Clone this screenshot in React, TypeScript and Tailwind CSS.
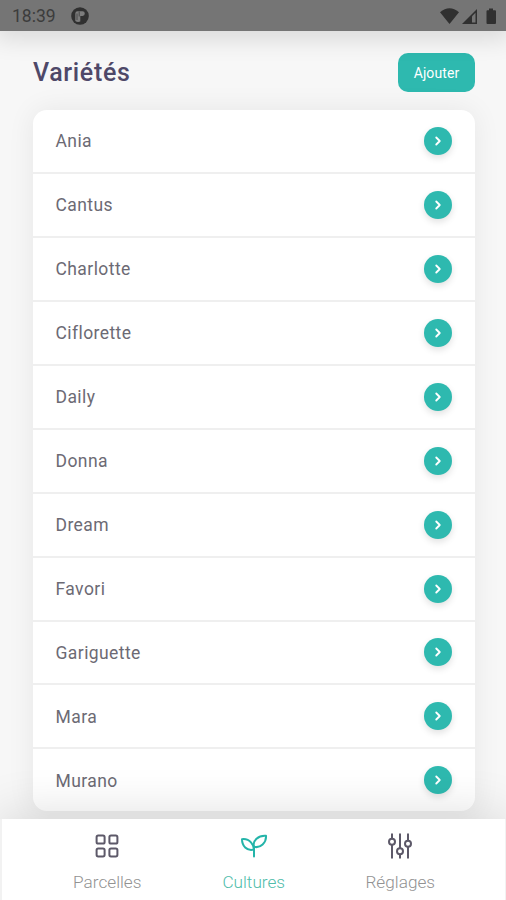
import { ChevronRight } from "lucide-react";

const varieties = [
    "Ania",
    "Cantus",
    "Charlotte",
    "Ciflorette",
    "Daily",
    "Donna",
    "Dream",
    "Favori",
    "Gariguette",
    "Mara",
    "Murano",
];

function StatusBar() {
    return (
        <div className="relative z-10 flex h-[31px] shrink-0 items-center justify-between bg-[#757575] pl-[12px] pr-[9px] pt-[1px] text-[#3c3c3c] shadow-[0_3px_24px_5px_rgba(0,0,0,0.12)]">
            <div className="flex items-center gap-[14px]">
                <span className="w-[45px] pt-px text-[17.5px] leading-none">18:39</span>
                <svg width="18" height="18" viewBox="0 0 18 18">
                    <circle cx="9" cy="9" r="8.8" fill="#303030" />
                    <path d="M4.3 14V6.5Q4.3 4.2 6.6 4.2H11.500Q13.800 4.200 13.800 6.600T11.500 9H9.300V14.500Q6.500 15.500 4.300 14Z" fill="#7c7c7c" />
                    <path d="M8.2 4.5V9.5M6 6.5V13" stroke="#484848" strokeWidth="1" />
                </svg>
            </div>
            <svg width="57" height="17" viewBox="0 0 57 17" fill="#303030">
                <path d="M0 4.2Q9.5-3.6 19 4.2L9.5 16Z" />
                <path d="M22 16L37 1V16Z" />
                <path d="M32 8.2L35.5 4.7V14.5H32Z" fill="#757575" />
                <path d="M47 2.2H49V.5H53V2.2H55Q56 2.2 56 3.2V15Q56 16 55 16H47.5Q46.5 16 46.5 15V3.2Q46.5 2.2 47.5 2.2Z" />
            </svg>
        </div>
    );
}

function VarietyRow({ name }: { name: string }) {
    return (
        <li className="flex h-[63.95px] items-center justify-between border-b-2 border-[#efefef] pl-[22.5px] pr-[22.6px] last:h-[62px] last:border-b-0">
            <span className="pt-[2px] text-[17.5px] leading-none tracking-[0.42px] text-[#6c6a74]">{name}</span>
            <button className="flex size-[28px] items-center justify-center rounded-full bg-[#2eb9af] text-white shadow-[0_3px_7px_rgba(0,0,0,0.12)]">
                <ChevronRight size={14} strokeWidth={3.2} />
            </button>
        </li>
    );
}

function ParcelIcon() {
    return (
        <svg width="24" height="24" viewBox="0 0 24 24" fill="none" stroke="#5d5969" strokeWidth="2">
            <rect x="1.6" y="1.6" width="8" height="8" rx="1.6" />
            <rect x="14.4" y="1.6" width="8" height="8" rx="1.6" />
            <rect x="1.6" y="14.4" width="8" height="8" rx="1.6" />
            <rect x="14.4" y="14.4" width="8" height="8" rx="1.6" />
        </svg>
    );
}

function CultureIcon() {
    return (
        <svg width="28" height="24" viewBox="0 0 28 24" fill="none" stroke="#24b4a9" strokeWidth="2" strokeLinejoin="round" strokeLinecap="round">
            <path d="M14 22.5V12.5" />
            <path d="M14 15.5C14 12 10.500 4.200 2 5.200C2 11.500 6.500 17.500 14 15.500Z" />
            <path d="M14 12.800C12.200 6.500 18.500 1.200 26 1.800C26.500 8.500 20.500 14.500 14 12.800Z" />
        </svg>
    );
}

function SettingsIcon() {
    return (
        <svg width="26" height="26" viewBox="0 0 26 26" fill="none" stroke="#5d5969" strokeWidth="2">
            <path d="M5 .5V5.5M5 12V25.5M13 .5V15M13 21.5V25.5M21 .5V7.5M21 14V25.5" />
            <circle cx="5" cy="8.7" r="3" />
            <circle cx="13" cy="18.2" r="3" />
            <circle cx="21" cy="10.7" r="3" />
        </svg>
    );
}

const tabs = [
    { label: "Parcelles", icon: <ParcelIcon />, active: false },
    { label: "Cultures", icon: <CultureIcon />, active: true },
    { label: "Réglages", icon: <SettingsIcon />, active: false },
];

export default function App() {
    return (
        <div className="flex h-[900px] w-[506px] flex-col overflow-hidden bg-[#f7f7f7] font-[Roboto,sans-serif]">
            <StatusBar />

            <main className="flex h-[788px] shrink-0 flex-col pl-[33px] pr-[31px]">
                <div className="mt-[22px] flex h-[39px] items-center justify-between">
                    <h1 className="text-[25px] font-medium leading-none tracking-[0.65px] text-[#4e4868]">Variétés</h1>
                    <button className="h-[39px] w-[77px] rounded-[10px] bg-[#2eb9af] text-[14px] leading-none tracking-[0.1px] text-white">Ajouter</button>
                </div>

                <ul className="mt-[18px] rounded-[14px] bg-white shadow-[0_0_28px_rgba(0,0,0,0.07)]">
                    {varieties.map((name) => (
                        <VarietyRow key={name} name={name} />
                    ))}
                </ul>
            </main>

            {/* Bottom tabs, their shadow fades over the end of the list */}
            <nav className="relative z-10 flex h-[81px] shrink-0 border-l-2 border-r border-[#f2f2f2] bg-white pt-[14px] shadow-[0_-4px_50px_rgba(0,0,0,0.14)]">
                {tabs.map((tab) => (
                    <div key={tab.label} className="flex w-[146.5px] flex-col items-center first:ml-[32px]">
                        <div className="flex h-[26px] items-center">{tab.icon}</div>
                        <span className={`mt-[15px] text-[17.2px] font-light leading-none ${tab.active ? "text-[#4fbcaa]" : "text-[#929292]"}`}>
                            {tab.label}
                        </span>
                    </div>
                ))}
            </nav>
        </div>
    );
}
